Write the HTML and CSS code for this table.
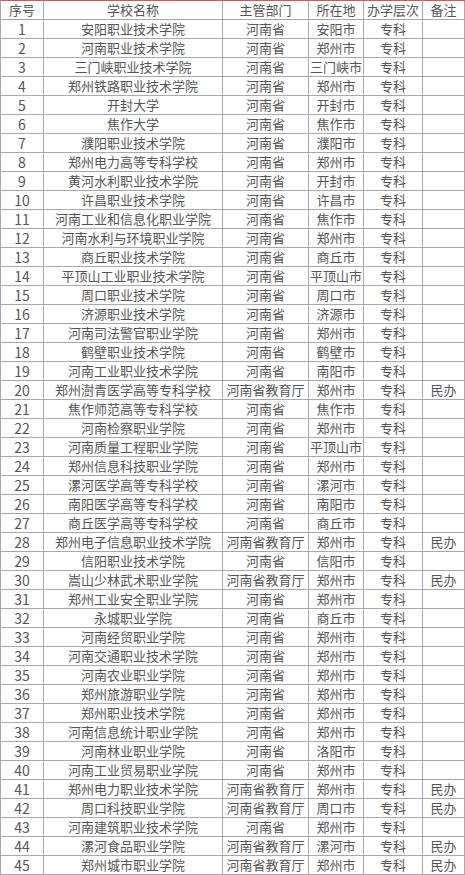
FILE: index.html
```html
<!DOCTYPE html>
<html lang="zh">
<head>
<meta charset="utf-8">
<title>河南高职院校名单</title>
<link rel="stylesheet" href="styles.css">
</head>
<body>
<div class="table">
<div class="c h">序号</div><div class="c h">学校名称</div><div class="c h">主管部门</div><div class="c h">所在地</div><div class="c h">办学层次</div><div class="c h">备注</div>
<div class="c n">1</div><div class="c">安阳职业技术学院</div><div class="c">河南省</div><div class="c">安阳市</div><div class="c">专科</div><div class="c"></div>
<div class="c n">2</div><div class="c">河南职业技术学院</div><div class="c">河南省</div><div class="c">郑州市</div><div class="c">专科</div><div class="c"></div>
<div class="c n">3</div><div class="c">三门峡职业技术学院</div><div class="c">河南省</div><div class="c">三门峡市</div><div class="c">专科</div><div class="c"></div>
<div class="c n">4</div><div class="c">郑州铁路职业技术学院</div><div class="c">河南省</div><div class="c">郑州市</div><div class="c">专科</div><div class="c"></div>
<div class="c n">5</div><div class="c">开封大学</div><div class="c">河南省</div><div class="c">开封市</div><div class="c">专科</div><div class="c"></div>
<div class="c n">6</div><div class="c">焦作大学</div><div class="c">河南省</div><div class="c">焦作市</div><div class="c">专科</div><div class="c"></div>
<div class="c n">7</div><div class="c">濮阳职业技术学院</div><div class="c">河南省</div><div class="c">濮阳市</div><div class="c">专科</div><div class="c"></div>
<div class="c n">8</div><div class="c">郑州电力高等专科学校</div><div class="c">河南省</div><div class="c">郑州市</div><div class="c">专科</div><div class="c"></div>
<div class="c n">9</div><div class="c">黄河水利职业技术学院</div><div class="c">河南省</div><div class="c">开封市</div><div class="c">专科</div><div class="c"></div>
<div class="c n">10</div><div class="c">许昌职业技术学院</div><div class="c">河南省</div><div class="c">许昌市</div><div class="c">专科</div><div class="c"></div>
<div class="c n">11</div><div class="c">河南工业和信息化职业学院</div><div class="c">河南省</div><div class="c">焦作市</div><div class="c">专科</div><div class="c"></div>
<div class="c n">12</div><div class="c">河南水利与环境职业学院</div><div class="c">河南省</div><div class="c">郑州市</div><div class="c">专科</div><div class="c"></div>
<div class="c n">13</div><div class="c">商丘职业技术学院</div><div class="c">河南省</div><div class="c">商丘市</div><div class="c">专科</div><div class="c"></div>
<div class="c n">14</div><div class="c">平顶山工业职业技术学院</div><div class="c">河南省</div><div class="c">平顶山市</div><div class="c">专科</div><div class="c"></div>
<div class="c n">15</div><div class="c">周口职业技术学院</div><div class="c">河南省</div><div class="c">周口市</div><div class="c">专科</div><div class="c"></div>
<div class="c n">16</div><div class="c">济源职业技术学院</div><div class="c">河南省</div><div class="c">济源市</div><div class="c">专科</div><div class="c"></div>
<div class="c n">17</div><div class="c">河南司法警官职业学院</div><div class="c">河南省</div><div class="c">郑州市</div><div class="c">专科</div><div class="c"></div>
<div class="c n">18</div><div class="c">鹤壁职业技术学院</div><div class="c">河南省</div><div class="c">鹤壁市</div><div class="c">专科</div><div class="c"></div>
<div class="c n">19</div><div class="c">河南工业职业技术学院</div><div class="c">河南省</div><div class="c">南阳市</div><div class="c">专科</div><div class="c"></div>
<div class="c n">20</div><div class="c">郑州澍青医学高等专科学校</div><div class="c">河南省教育厅</div><div class="c">郑州市</div><div class="c">专科</div><div class="c">民办</div>
<div class="c n">21</div><div class="c">焦作师范高等专科学校</div><div class="c">河南省</div><div class="c">焦作市</div><div class="c">专科</div><div class="c"></div>
<div class="c n">22</div><div class="c">河南检察职业学院</div><div class="c">河南省</div><div class="c">郑州市</div><div class="c">专科</div><div class="c"></div>
<div class="c n">23</div><div class="c">河南质量工程职业学院</div><div class="c">河南省</div><div class="c">平顶山市</div><div class="c">专科</div><div class="c"></div>
<div class="c n">24</div><div class="c">郑州信息科技职业学院</div><div class="c">河南省</div><div class="c">郑州市</div><div class="c">专科</div><div class="c"></div>
<div class="c n">25</div><div class="c">漯河医学高等专科学校</div><div class="c">河南省</div><div class="c">漯河市</div><div class="c">专科</div><div class="c"></div>
<div class="c n">26</div><div class="c">南阳医学高等专科学校</div><div class="c">河南省</div><div class="c">南阳市</div><div class="c">专科</div><div class="c"></div>
<div class="c n">27</div><div class="c">商丘医学高等专科学校</div><div class="c">河南省</div><div class="c">商丘市</div><div class="c">专科</div><div class="c"></div>
<div class="c n">28</div><div class="c">郑州电子信息职业技术学院</div><div class="c">河南省教育厅</div><div class="c">郑州市</div><div class="c">专科</div><div class="c">民办</div>
<div class="c n">29</div><div class="c">信阳职业技术学院</div><div class="c">河南省</div><div class="c">信阳市</div><div class="c">专科</div><div class="c"></div>
<div class="c n">30</div><div class="c">嵩山少林武术职业学院</div><div class="c">河南省教育厅</div><div class="c">郑州市</div><div class="c">专科</div><div class="c">民办</div>
<div class="c n">31</div><div class="c">郑州工业安全职业学院</div><div class="c">河南省</div><div class="c">郑州市</div><div class="c">专科</div><div class="c"></div>
<div class="c n">32</div><div class="c">永城职业学院</div><div class="c">河南省</div><div class="c">商丘市</div><div class="c">专科</div><div class="c"></div>
<div class="c n">33</div><div class="c">河南经贸职业学院</div><div class="c">河南省</div><div class="c">郑州市</div><div class="c">专科</div><div class="c"></div>
<div class="c n">34</div><div class="c">河南交通职业技术学院</div><div class="c">河南省</div><div class="c">郑州市</div><div class="c">专科</div><div class="c"></div>
<div class="c n">35</div><div class="c">河南农业职业学院</div><div class="c">河南省</div><div class="c">郑州市</div><div class="c">专科</div><div class="c"></div>
<div class="c n">36</div><div class="c">郑州旅游职业学院</div><div class="c">河南省</div><div class="c">郑州市</div><div class="c">专科</div><div class="c"></div>
<div class="c n">37</div><div class="c">郑州职业技术学院</div><div class="c">河南省</div><div class="c">郑州市</div><div class="c">专科</div><div class="c"></div>
<div class="c n">38</div><div class="c">河南信息统计职业学院</div><div class="c">河南省</div><div class="c">郑州市</div><div class="c">专科</div><div class="c"></div>
<div class="c n">39</div><div class="c">河南林业职业学院</div><div class="c">河南省</div><div class="c">洛阳市</div><div class="c">专科</div><div class="c"></div>
<div class="c n">40</div><div class="c">河南工业贸易职业学院</div><div class="c">河南省</div><div class="c">郑州市</div><div class="c">专科</div><div class="c"></div>
<div class="c n">41</div><div class="c">郑州电力职业技术学院</div><div class="c">河南省教育厅</div><div class="c">郑州市</div><div class="c">专科</div><div class="c">民办</div>
<div class="c n">42</div><div class="c">周口科技职业学院</div><div class="c">河南省教育厅</div><div class="c">周口市</div><div class="c">专科</div><div class="c">民办</div>
<div class="c n">43</div><div class="c">河南建筑职业技术学院</div><div class="c">河南省</div><div class="c">郑州市</div><div class="c">专科</div><div class="c"></div>
<div class="c n">44</div><div class="c">漯河食品职业学院</div><div class="c">河南省教育厅</div><div class="c">漯河市</div><div class="c">专科</div><div class="c">民办</div>
<div class="c n">45</div><div class="c">郑州城市职业学院</div><div class="c">河南省教育厅</div><div class="c">郑州市</div><div class="c">专科</div><div class="c">民办</div>
</div>
</body>
</html>
```
FILE: styles.css
```css
html, body {
  margin: 0;
  padding: 0;
  background: #ffffff;
}
.table {
  display: grid;
  grid-template-columns: 43px 179px 86px 55px 59px 42px;
  grid-auto-rows: 19px;
  width: 465px;
  box-sizing: border-box;
  border-left: 1px solid #a9a6b6;
  border-top: 1px solid #cf5a5a;
  font-family: "Noto Sans CJK SC", "Microsoft YaHei", sans-serif;
  font-size: 13px;
  color: #555555;
}
.c {
  box-sizing: border-box;
  border-right: 1px solid #a9a6b6;
  border-bottom: 1px solid #a9a6b6;
  text-align: center;
  line-height: 18px;
  white-space: nowrap;
  overflow: hidden;
}
.n {
  font-family: "Noto Sans CJK SC", "Noto Sans", sans-serif;
  font-size: 14px;
}
```
